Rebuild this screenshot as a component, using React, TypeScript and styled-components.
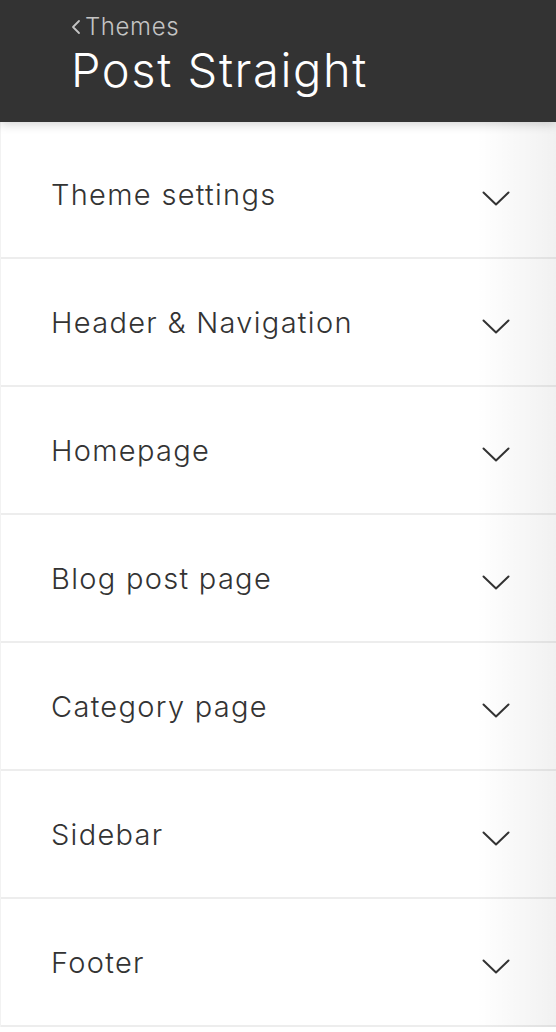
import styled, { createGlobalStyle } from 'styled-components';

const GlobalStyle = createGlobalStyle`
  html, body {
    margin: 0;
    padding: 0;
    background: #ffffff;
  }
  body {
    font-family: Inter, 'Noto Sans', 'Liberation Sans', sans-serif;
    color: #333333;
  }
`;

const Page = styled.div`
  width: 556px;
  min-height: 1032px;
  position: relative;
  overflow: hidden;
`;

const Header = styled.header`
  position: relative;
  z-index: 2;
  height: 122px;
  box-sizing: border-box;
  padding: 12px 0 0 71px;
  background: #333333;
  box-shadow: 0 2px 10px rgba(0, 0, 0, 0.18);
  display: flex;
  flex-direction: column;
`;

const BackLink = styled.a`
  display: flex;
  align-items: center;
  gap: 4px;
  font-size: 24px;
  font-weight: 300;
  line-height: 30px;
  color: #c4c4c4;
  text-decoration: none;
  letter-spacing: 0.6px;
`;

const Title = styled.h1`
  margin: 0;
  font-size: 47px;
  font-weight: 300;
  line-height: 56px;
  color: #ffffff;
  letter-spacing: 1.6px;
`;

const List = styled.ul`
  list-style: none;
  margin: 0;
  padding: 9px 0 0;
  position: relative;
  border-left: 1px solid #f2f2f2;

  &::after {
    content: '';
    position: absolute;
    top: 0;
    right: 0;
    bottom: 0;
    width: 80px;
    pointer-events: none;
    background: linear-gradient(to right, rgba(0, 0, 0, 0), rgba(0, 0, 0, 0.055));
  }
`;

const Row = styled.li`
  height: 128px;
  box-sizing: border-box;
  border-bottom: 2px solid #ededed;
  padding: 0 46px 0 50px;
  display: flex;
  align-items: center;
  justify-content: space-between;
`;

const Label = styled.span`
  font-size: 29px;
  font-weight: 300;
  color: #333333;
  letter-spacing: 1.3px;
`;

const ChevronBox = styled.span`
  display: flex;
  margin-top: 10px;
`;

const Chevron = () => (
  <ChevronBox>
    <svg width="28" height="16" viewBox="0 0 28 16" fill="none">
      <polyline
        points="1.5,1.5 14,13.5 26.5,1.5"
        stroke="#333333"
        strokeWidth="2"
        strokeLinecap="round"
        strokeLinejoin="round"
      />
    </svg>
  </ChevronBox>
);

const BackArrow = () => (
  <svg width="10" height="16" viewBox="0 0 10 16" fill="none">
    <polyline
      points="8,2 2,8 8,14"
      stroke="#c4c4c4"
      strokeWidth="1.8"
      strokeLinecap="round"
      strokeLinejoin="round"
    />
  </svg>
);

const sections = [
  'Theme settings',
  'Header & Navigation',
  'Homepage',
  'Blog post page',
  'Category page',
  'Sidebar',
  'Footer',
];

export default function App() {
  return (
    <Page>
      <GlobalStyle />
      <Header>
        <BackLink href="#">
          <BackArrow />
          Themes
        </BackLink>
        <Title>Post Straight</Title>
      </Header>
      <List>
        {sections.map((name) => (
          <Row key={name}>
            <Label>{name}</Label>
            <Chevron />
          </Row>
        ))}
      </List>
    </Page>
  );
}
